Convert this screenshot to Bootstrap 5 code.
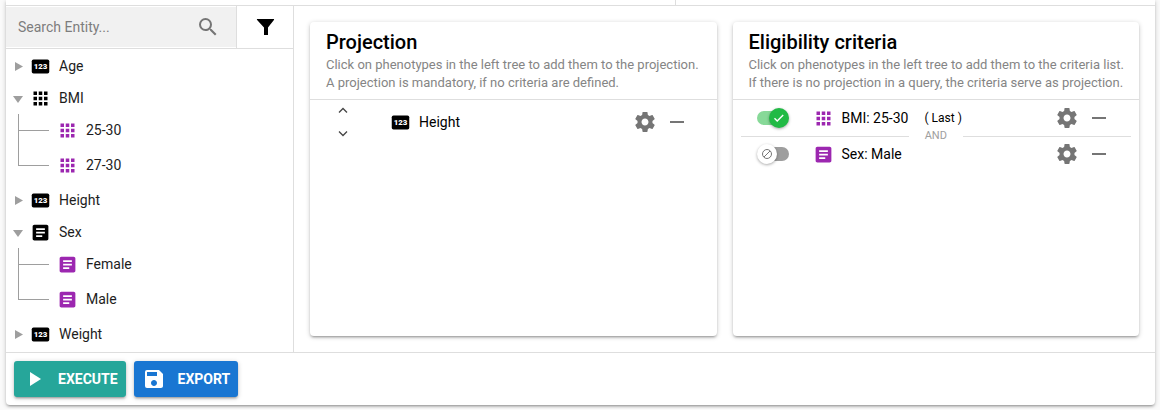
<!DOCTYPE html>
<html lang="en">
<head>
<meta charset="utf-8">
<meta name="viewport" content="width=device-width, initial-scale=1">
<title>Query builder</title>
<link href="https://cdn.jsdelivr.net/npm/bootstrap@5.3.0/dist/css/bootstrap.min.css" rel="stylesheet">
<style>
  :root { --line: #dedede; --elev: 0 1px 5px rgba(0,0,0,.2), 0 2px 2px rgba(0,0,0,.14), 0 3px 1px -2px rgba(0,0,0,.12); }
  body { font-family: Roboto, "Liberation Sans", sans-serif; font-size: 14px; line-height: 20px; color: #1d1d1d; background: #fafafa; padding: 0 5px 4px 6px; }
  .shell { background: #fff; border-radius: 0 0 4px 4px; box-shadow: var(--elev); }
  .edge { border: 0 solid var(--line); }
  .edge-b { border-bottom-width: 1px; } .edge-e { border-right-width: 1px; } .edge-t { border-top-width: 1px; }
  .tabs-strip { height: 6px; }
  .icon { width: 24px; height: 24px; fill: currentColor; flex: none; display: block; }
  .icon-md { width: 21px; height: 21px; }
  .icon-sm { width: 18px; height: 18px; }
  .plain { background: none; border: 0; padding: 0; color: inherit; }
  .purple { color: #9c27b0; } .ink { color: #000; } .grey { color: #757575; }

  .entities { width: 288px; flex: none; }
  .search-row { height: 43px; }
  .search-box { background: #f1f1f1; margin: 1px 0; padding: 0 16px 0 12px; }
  .search-box input { background: none; border: 0; outline: 0; min-width: 0; padding: 0; color: #333; }
  .search-box input::placeholder { color: #7d7d7d; opacity: 1; }
  .filter-btn { width: 56px; }

  .tree { padding: 1px 0 2px; }
  .tree-row { height: 32px; padding-left: 6px; }
  .tree .caret { width: 12px; height: 12px; fill: #9e9e9e; display: block; margin-right: 6px; }
  .tree .glyph { margin-right: 8px; }
  .branch { padding-left: 12px; margin-bottom: 3px; }
  .branch > li { position: relative; padding-left: 33px; margin-bottom: 3px; }
  .branch .tree-row { padding-left: 6px; }
  .branch > li::before { content: ""; position: absolute; left: 0; top: 0; width: 31px; height: 17px; border: solid #9e9e9e; border-width: 0 0 1px 1px; }
  .branch > li + li::before { top: -19px; height: 36px; }

  .boards { padding: 16px; gap: 16px; }
  .board { background: #fff; border-radius: 4px; box-shadow: var(--elev); flex: 1 1 0; min-width: 0; }
  .board header { padding: 8px 8px 7px 16px; }
  .board h2 { font-size: 20px; font-weight: 500; line-height: 24px; margin: 0 0 2px; color: #000; }
  .board header p { font-size: 13px; line-height: 18px; margin: 0; color: #858585; }
  .item { padding: 0 28px 0 24px; height: 36px; color: #000; }
  .item-tall { height: 44px; }
  .item .lead-cell { width: 56px; flex: none; }
  .item .glyph { margin-right: 8px; }
  .mover { color: #444; }
  .note { font-size: 12px; margin-left: 16px; }
  .joiner { height: 16px; margin: -8px 0; padding: 0 8px; gap: 16px; font-size: 11px; color: #9e9e9e; }
  .joiner::before, .joiner::after { content: ""; flex: 1; border-top: 1px solid var(--line); }

  .toggle { appearance: none; display: block; position: relative; width: 32px; height: 20px; margin: 0; }
  .toggle::before { content: ""; position: absolute; left: 4px; top: 3px; width: 28px; height: 14px; border-radius: 7px; background: #9e9e9e; }
  .toggle::after { content: ""; position: absolute; left: 0; top: 0; width: 20px; height: 20px; border-radius: 50%; box-shadow: 0 1px 3px rgba(0,0,0,.35);
    background: #fff url("data:image/svg+xml,%3Csvg xmlns='http://www.w3.org/2000/svg' viewBox='0 0 12 12' fill='none' stroke='%23757575'%3E%3Ccircle cx='6' cy='6' r='4.5'/%3E%3Cpath d='M3 9l6-6'/%3E%3C/svg%3E") center / 12px no-repeat; }
  .toggle:checked::before { left: 0; background: #87d998; }
  .toggle:checked::after { left: 12px; background: #21ba45 url("data:image/svg+xml,%3Csvg xmlns='http://www.w3.org/2000/svg' viewBox='0 0 12 12' fill='none' stroke='%23fff' stroke-width='1.4'%3E%3Cpath d='M1.500 6.300l2.700 2.700 6-6'/%3E%3C/svg%3E") center / 12px no-repeat; }

  .actions { padding: 8px; gap: 8px; }
  .action { height: 36px; padding: 0 8px; gap: 12px; border: 0; border-radius: 3px; color: #fff; font-weight: 700; box-shadow: var(--elev); }
  .action-run { background: #26a69a; } .action-save { background: #1976d2; }
</style>
</head>
<body>
<svg class="d-none" aria-hidden="true">
  <symbol id="i-search" viewBox="0 0 24 24"><path d="M15.5 14h-.79l-.28-.27A6.471 6.471 0 0 0 16 9.5 6.5 6.5 0 1 0 9.5 16c1.61 0 3.09-.59 4.23-1.57l.27.28v.79l5 4.99L20.49 19l-4.99-5zm-6 0C7.01 14 5 11.99 5 9.5S7.01 5 9.5 5 14 7.01 14 9.5 11.99 14 9.5 14z"/></symbol>
  <symbol id="i-filter" viewBox="0 0 24 24"><path d="M4.500 4h16c.6 0 .8.600.4 1.100L15 12.500V20h-4v-7.500L4.100 5.100c-.4-.5-.2-1.100.4-1.100z"/></symbol>
  <symbol id="i-num" viewBox="0 0 24 24"><rect x="2" y="4" width="20" height="16" rx="2"/><text x="12" y="15.3" text-anchor="middle" font-size="9" font-weight="900" fill="#fff">123</text></symbol>
  <symbol id="i-grid" viewBox="0 0 24 24"><path d="M4 8h4V4H4v4zm6 12h4v-4h-4v4zm-6 0h4v-4H4v4zm0-6h4v-4H4v4zm6 0h4v-4h-4v4zm6-10v4h4V4h-4zm-6 4h4V4h-4v4zm6 6h4v-4h-4v4zm0 6h4v-4h-4v4z"/></symbol>
  <symbol id="i-text" viewBox="0 0 24 24"><path d="M19 3H5c-1.1 0-2 .9-2 2v14c0 1.1.9 2 2 2h14c1.1 0 2-.9 2-2V5c0-1.1-.9-2-2-2zm-5 14H7v-2h7v2zm3-4H7v-2h10v2zm0-4H7V7h10v2z"/></symbol>
  <symbol id="i-gear" viewBox="0 0 24 24"><path d="M19.43 12.98c.04-.32.07-.64.07-.98s-.03-.66-.07-.98l2.11-1.65c.19-.15.24-.42.12-.64l-2-3.46c-.12-.22-.39-.3-.61-.22l-2.49 1c-.52-.4-1.08-.73-1.69-.98l-.38-2.65C14.46 2.18 14.25 2 14 2h-4c-.25 0-.46.18-.49.42l-.38 2.65c-.61.25-1.17.59-1.69.98l-2.49-1c-.23-.09-.49 0-.61.22l-2 3.46c-.13.22-.07.49.12.64l2.11 1.65c-.04.32-.07.65-.07.98s.03.66.07.98l-2.11 1.65c-.19.15-.24.42-.12.64l2 3.46c.12.22.39.3.61.22l2.49-1c.52.4 1.08.73 1.69.98l.38 2.65c.03.24.24.42.49.42h4c.25 0 .46-.18.49-.42l.38-2.65c.61-.25 1.17-.59 1.69-.98l2.49 1c.23.09.49 0 .61-.22l2-3.46c.12-.22.07-.49-.12-.64l-2.11-1.65zM12 15.5c-1.93 0-3.5-1.57-3.5-3.5s1.57-3.5 3.5-3.5 3.5 1.57 3.5 3.5-1.57 3.5-3.5 3.5z"/></symbol>
  <symbol id="i-minus" viewBox="0 0 24 24"><path d="M19 13H5v-2h14v2z"/></symbol>
  <symbol id="i-up" viewBox="0 0 18 18"><path d="M5 10.500l4-4 4 4" fill="none" stroke="currentColor" stroke-width="1.300"/></symbol>
  <symbol id="i-down" viewBox="0 0 18 18"><path d="M5 7.500l4 4 4-4" fill="none" stroke="currentColor" stroke-width="1.300"/></symbol>
  <symbol id="i-play" viewBox="0 0 24 24"><path d="M8 5v14l11-7z"/></symbol>
  <symbol id="i-save" viewBox="0 0 24 24"><path d="M17 3H5a2 2 0 0 0-2 2v14a2 2 0 0 0 2 2h14c1.1 0 2-.9 2-2V7l-4-4zm-5 16c-1.66 0-3-1.34-3-3s1.34-3 3-3 3 1.34 3 3-1.34 3-3 3zm3-10H5V5h10v4z"/></symbol>
  <symbol id="i-closed" viewBox="0 0 12 12"><path d="M3 2v9l8-4.500z"/></symbol>
  <symbol id="i-open" viewBox="0 0 12 12"><path d="M1 4h10l-5 7z"/></symbol>
</svg>

<div class="shell">
  <div class="row g-0 tabs-strip edge edge-b"><div class="col-7 edge edge-e"></div><div class="col-5"></div></div>

  <div class="d-flex">
    <aside class="entities edge edge-e">
      <div class="search-row d-flex edge edge-b">
        <label class="search-box d-flex align-items-center flex-grow-1">
          <input class="flex-grow-1" type="text" placeholder="Search Entity..." aria-label="Search Entity">
          <svg class="icon grey"><use href="#i-search"/></svg>
        </label>
        <div class="edge edge-e"></div>
        <button class="plain filter-btn ink d-flex align-items-center justify-content-center" type="button" aria-label="Filter"><svg class="icon"><use href="#i-filter"/></svg></button>
      </div>
      <ul class="tree list-unstyled m-0">
        <li><div class="tree-row d-flex align-items-center"><button class="plain" type="button" aria-label="Expand Age"><svg class="caret"><use href="#i-closed"/></svg></button><svg class="icon icon-md glyph ink"><use href="#i-num"/></svg><span>Age</span></div></li>
        <li><div class="tree-row d-flex align-items-center"><button class="plain" type="button" aria-label="Collapse BMI"><svg class="caret"><use href="#i-open"/></svg></button><svg class="icon icon-md glyph ink"><use href="#i-grid"/></svg><span>BMI</span></div>
          <ul class="branch list-unstyled">
            <li><div class="tree-row d-flex align-items-center"><svg class="icon icon-md glyph purple"><use href="#i-grid"/></svg><span>25-30</span></div></li>
            <li><div class="tree-row d-flex align-items-center"><svg class="icon icon-md glyph purple"><use href="#i-grid"/></svg><span>27-30</span></div></li>
          </ul>
        </li>
        <li><div class="tree-row d-flex align-items-center"><button class="plain" type="button" aria-label="Expand Height"><svg class="caret"><use href="#i-closed"/></svg></button><svg class="icon icon-md glyph ink"><use href="#i-num"/></svg><span>Height</span></div></li>
        <li><div class="tree-row d-flex align-items-center"><button class="plain" type="button" aria-label="Collapse Sex"><svg class="caret"><use href="#i-open"/></svg></button><svg class="icon icon-md glyph ink"><use href="#i-text"/></svg><span>Sex</span></div>
          <ul class="branch list-unstyled">
            <li><div class="tree-row d-flex align-items-center"><svg class="icon icon-md glyph purple"><use href="#i-text"/></svg><span>Female</span></div></li>
            <li><div class="tree-row d-flex align-items-center"><svg class="icon icon-md glyph purple"><use href="#i-text"/></svg><span>Male</span></div></li>
          </ul>
        </li>
        <li><div class="tree-row d-flex align-items-center"><button class="plain" type="button" aria-label="Expand Weight"><svg class="caret"><use href="#i-closed"/></svg></button><svg class="icon icon-md glyph ink"><use href="#i-num"/></svg><span>Weight</span></div></li>
      </ul>
    </aside>

    <main class="boards d-flex flex-grow-1">
      <section class="board">
        <header class="edge edge-b">
          <h2>Projection</h2>
          <p>Click on phenotypes in the left tree to add them to the projection.<br>A projection is mandatory, if no criteria are defined.</p>
        </header>
        <div class="item item-tall d-flex align-items-center">
          <div class="lead-cell mover d-grid gap-1">
            <button class="plain" type="button" aria-label="Move up"><svg class="icon icon-sm"><use href="#i-up"/></svg></button>
            <button class="plain" type="button" aria-label="Move down"><svg class="icon icon-sm"><use href="#i-down"/></svg></button>
          </div>
          <svg class="icon icon-md glyph"><use href="#i-num"/></svg><span>Height</span>
          <div class="d-flex gap-2 ms-auto grey">
            <button class="plain" type="button" aria-label="Settings"><svg class="icon"><use href="#i-gear"/></svg></button>
            <button class="plain" type="button" aria-label="Remove"><svg class="icon"><use href="#i-minus"/></svg></button>
          </div>
        </div>
      </section>

      <section class="board">
        <header class="edge edge-b">
          <h2>Eligibility criteria</h2>
          <p>Click on phenotypes in the left tree to add them to the criteria list.<br>If there is no projection in a query, the criteria serve as projection.</p>
        </header>
        <div class="item d-flex align-items-center">
          <div class="lead-cell"><input class="toggle" id="use-bmi" type="checkbox" role="switch" checked></div>
          <svg class="icon icon-md glyph purple"><use href="#i-grid"/></svg><label for="use-bmi">BMI: 25-30</label><span class="note">( Last )</span>
          <div class="d-flex gap-2 ms-auto grey">
            <button class="plain" type="button" aria-label="Settings"><svg class="icon"><use href="#i-gear"/></svg></button>
            <button class="plain" type="button" aria-label="Remove"><svg class="icon"><use href="#i-minus"/></svg></button>
          </div>
        </div>
        <div class="joiner d-flex align-items-center">AND</div>
        <div class="item d-flex align-items-center">
          <div class="lead-cell"><input class="toggle" id="use-sex" type="checkbox" role="switch"></div>
          <svg class="icon icon-md glyph purple"><use href="#i-text"/></svg><label for="use-sex">Sex: Male</label>
          <div class="d-flex gap-2 ms-auto grey">
            <button class="plain" type="button" aria-label="Settings"><svg class="icon"><use href="#i-gear"/></svg></button>
            <button class="plain" type="button" aria-label="Remove"><svg class="icon"><use href="#i-minus"/></svg></button>
          </div>
        </div>
      </section>
    </main>
  </div>

  <footer class="actions d-flex edge edge-t">
    <button class="action action-run d-flex align-items-center" type="button"><svg class="icon"><use href="#i-play"/></svg>EXECUTE</button>
    <button class="action action-save d-flex align-items-center" type="button"><svg class="icon"><use href="#i-save"/></svg>EXPORT</button>
  </footer>
</div>
<script src="https://cdn.jsdelivr.net/npm/bootstrap@5.3.0/dist/js/bootstrap.bundle.min.js"></script>
</body>
</html>
